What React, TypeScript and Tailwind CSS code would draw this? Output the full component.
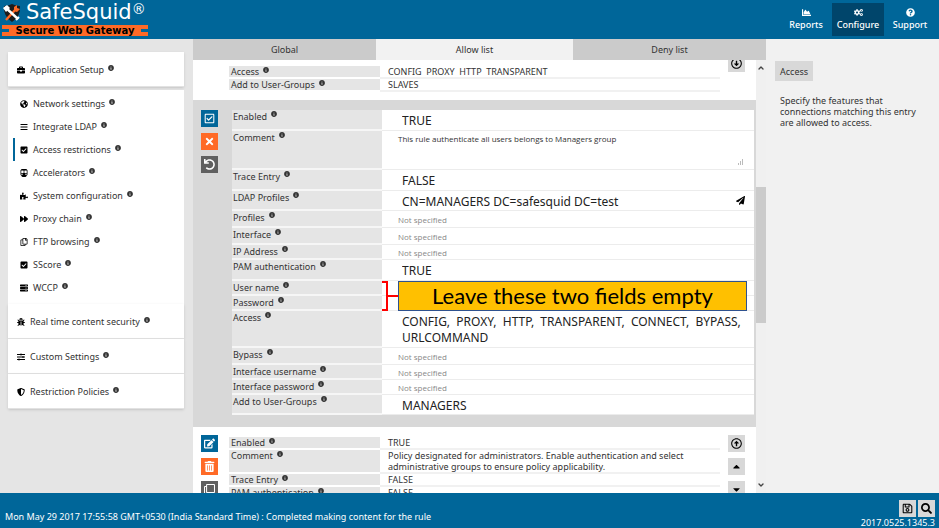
import type { ReactNode } from "react";
import type { IconType } from "react-icons";
import {
  FaBars,
  FaBriefcase,
  FaBug,
  FaCaretDown,
  FaCaretUp,
  FaChartArea,
  FaCheckSquare,
  FaCogs,
  FaEdit,
  FaForward,
  FaGlobeAmericas,
  FaInfoCircle,
  FaPaperPlane,
  FaPuzzlePiece,
  FaQuestionCircle,
  FaRegArrowAltCircleDown,
  FaRegArrowAltCircleUp,
  FaRegCheckSquare,
  FaRegClone,
  FaRegCopy,
  FaRegSave,
  FaSearch,
  FaServer,
  FaShieldAlt,
  FaSlidersH,
  FaSubway,
  FaTimes,
  FaTrashAlt,
  FaUndo,
} from "react-icons/fa";
import { LuChevronDown, LuChevronUp } from "react-icons/lu";

interface NavItem {
  label: string;
  icon: IconType;
  active?: boolean;
}

const setupItems: NavItem[] = [
  { label: "Network settings", icon: FaGlobeAmericas },
  { label: "Integrate LDAP", icon: FaBars },
  { label: "Access restrictions", icon: FaCheckSquare, active: true },
  { label: "Accelerators", icon: FaSubway },
  { label: "System configuration", icon: FaPuzzlePiece },
  { label: "Proxy chain", icon: FaForward },
  { label: "FTP browsing", icon: FaRegCopy },
  { label: "SScore", icon: FaCheckSquare },
  { label: "WCCP", icon: FaServer },
];

const sections: NavItem[] = [
  { label: "Real time content security", icon: FaBug },
  { label: "Custom Settings", icon: FaSlidersH },
  { label: "Restriction Policies", icon: FaShieldAlt },
];

function Info() {
  return <FaInfoCircle className="mt-px mb-1 ml-1 inline-block size-1.5 align-top text-[#333]" />;
}

function Logo() {
  return (
    <div className="w-[146px]">
      <div className="flex h-[25px] items-center gap-1 text-white">
        <svg viewBox="0 0 20 20" className="size-5 shrink-0">
          <path d="M2 3 Q6 3 10 1 Q14 3 18 3 Q19 13 10 19 Q1 13 2 3Z" fill="#1c1c1c" />
          <path d="M4 17 L14 6" stroke="#ff6a26" strokeWidth="2.4" />
          <path d="M12 4 L15 2 L15 5 L18 6 L15 9 L12 8Z" fill="#ff6a26" />
          <path d="M3 4 L16 16" stroke="#fff" strokeWidth="2.4" />
          <path d="M1 5 L5 2 L8 5 L4 9Z" fill="#fff" />
          <path d="M14 17 L17 14" stroke="#fff" strokeWidth="2" />
        </svg>
        <span className="flex items-start font-['DejaVu_Sans',sans-serif] text-[21px] leading-[21px]">
          SafeSquid
          <span className="text-[14px] leading-[14px]">®</span>
        </span>
      </div>
      <div className="flex h-[11px] items-center justify-between bg-[#ff6a26]">
        <span className="h-[3px] w-[7px] bg-[#006699]" />
        <span className="font-['DejaVu_Sans',sans-serif] text-[10px] leading-[11px] font-bold text-black">
          Secure Web Gateway
        </span>
        <span className="h-[3px] w-[7px] bg-[#006699]" />
      </div>
    </div>
  );
}

function TopLink({ label, icon: Icon, active }: NavItem) {
  return (
    <a
      href="#"
      className={`flex h-[33px] w-[52px] flex-col items-center justify-center gap-0.5 text-[9px] leading-[12px] font-medium text-white ${
        active ? "bg-[#00456b]" : ""
      }`}
    >
      <Icon className="size-[9px]" />
      {label}
    </a>
  );
}

function SectionLink({ label, icon: Icon }: NavItem) {
  return (
    <a href="#" className="flex h-[35px] items-center border-b border-[#e2e2e2] bg-white px-[9px] pt-px shadow-sm">
      <Icon className="mr-[5px] size-2 text-black" />
      {label}
      <Info />
    </a>
  );
}

function Sidebar() {
  return (
    <nav className="w-[193px] shrink-0 bg-[#e5e5e5] py-[13px] pr-[9px] pl-2">
      <SectionLink label="Application Setup" icon={FaBriefcase} />
      <ul className="mt-[3px] bg-white pt-0.5 pb-[5px]">
        {setupItems.map(({ label, icon: Icon, active }) => (
          <li key={label} className="px-[5px]">
            <a
              href="#"
              className={`flex h-[23px] items-center border-l-2 pl-[5px] ${
                active ? "border-[#006699]" : "border-transparent"
              }`}
            >
              <Icon className="mr-[5px] size-2 text-black" />
              {label}
              <Info />
            </a>
          </li>
        ))}
      </ul>
      {sections.map((section) => (
        <SectionLink key={section.label} {...section} />
      ))}
    </nav>
  );
}

const tones = {
  blue: "bg-[#006699] text-white",
  orange: "bg-[#ff6a26] text-white",
  dark: "bg-[#606060] text-white",
  light: "bg-[#d8d8d8] text-black",
};

function Tool({ label, icon: Icon, tone }: { label: string; icon: IconType; tone: keyof typeof tones }) {
  return (
    <button
      type="button"
      aria-label={label}
      className={`flex size-[17px] shrink-0 items-center justify-center ${tones[tone]}`}
    >
      <Icon className="size-[11px]" />
    </button>
  );
}

// Read-only row of a collapsed policy
function ReadRow({ label, children }: { label: string; children: ReactNode }) {
  return (
    <div className="flex">
      <dt className="w-[151px] shrink-0 border-b-2 border-white bg-[#e5e5e5] pl-0.5">
        {label}
        <Info />
      </dt>
      <dd className="flex-1 border-b-2 border-[#f1f1f1] pl-2 whitespace-pre-line">{children}</dd>
    </div>
  );
}

// Editable row of the open policy
function FieldRow({
  id,
  label,
  className,
  children,
}: {
  id: string;
  label: string;
  className: string;
  children?: ReactNode;
}) {
  return (
    <div className={`flex ${className}`}>
      <label
        htmlFor={id}
        className="w-[150px] shrink-0 border-b-2 border-[#f6f6f6] bg-[#e5e5e5] pl-px leading-[13px]"
      >
        {label}
        <Info />
      </label>
      <div className="flex min-w-0 flex-1 items-center border-b border-[#ececec]">{children}</div>
    </div>
  );
}

function BoolField({ id, label, value }: { id: string; label: string; value: string }) {
  return (
    <FieldRow id={id} label={label} className="h-[21px]">
      <select
        id={id}
        defaultValue={value}
        className="w-full appearance-none pt-0.5 pl-5 text-[12px] leading-4 text-[#222]"
      >
        <option>TRUE</option>
        <option>FALSE</option>
      </select>
    </FieldRow>
  );
}

function TextField({ id, label, value, icon }: { id: string; label: string; value: string; icon?: ReactNode }) {
  return (
    <FieldRow id={id} label={label} className="h-5">
      <input id={id} defaultValue={value} className="min-w-0 flex-1 pt-0.5 pl-5 text-[12px] leading-4 text-[#222]" />
      {icon}
    </FieldRow>
  );
}

function EmptyField({ id, label, className }: { id: string; label: string; className: string }) {
  return (
    <FieldRow id={id} label={label} className={className}>
      <input
        id={id}
        placeholder="Not specified"
        className="w-full pt-0.5 pl-4 font-['Open_Sans',sans-serif] text-[8px] leading-3 placeholder:text-[#888]"
      />
    </FieldRow>
  );
}

function Callout() {
  return (
    <div className="absolute inset-y-0 right-[7px] left-[150px] flex">
      <svg viewBox="0 0 16 30" className="h-[30px] w-4 shrink-0">
        <path d="M0 1 H5 V29 H0 M5 15 H16" fill="none" stroke="#f00" strokeWidth="2" />
      </svg>
      <p className="flex flex-1 items-center justify-center border border-[#2f528f] bg-[#ffc000] font-['Lato',sans-serif] text-[22px] leading-none text-black">
        Leave these two fields empty
      </p>
    </div>
  );
}

function PolicyForm() {
  return (
    <form className="min-w-0 flex-1 bg-white">
      <BoolField id="enabled" label="Enabled" value="TRUE" />
      <FieldRow id="comment" label="Comment" className="h-[39px]">
        <div className="relative h-full w-full">
          <textarea
            id="comment"
            defaultValue="This rule authenticate all users belongs to Managers group"
            className="block h-full w-full resize-none pt-0.5 pl-4 font-['Open_Sans',sans-serif] text-[8px] leading-3"
          />
          <svg viewBox="0 0 6 6" className="absolute right-2.5 bottom-1 size-1.5 text-[#bbb]">
            <path d="M0 4h1v2h-1z M2 2h1v4h-1z M4 0h1v6h-1z" fill="currentColor" />
          </svg>
        </div>
      </FieldRow>
      <BoolField id="trace" label="Trace Entry" value="FALSE" />
      <TextField
        id="ldap"
        label="LDAP Profiles"
        value="CN=MANAGERS DC=safesquid DC=test"
        icon={<FaPaperPlane className="mr-[9px] size-[9px] text-black" />}
      />
      <EmptyField id="profiles" label="Profiles" className="h-[17px]" />
      <EmptyField id="interface" label="Interface" className="h-[17px]" />
      <EmptyField id="ip" label="IP Address" className="h-[15px]" />
      <BoolField id="pam" label="PAM authentication" value="TRUE" />
      <div className="relative">
        <FieldRow id="user" label="User name" className="h-[15px]">
          <input id="user" className="w-full" />
        </FieldRow>
        <FieldRow id="password" label="Password" className="h-[15px]">
          <input id="password" type="password" className="w-full" />
        </FieldRow>
        <Callout />
      </div>
      <FieldRow id="access" label="Access" className="h-[37px]">
        <textarea
          id="access"
          defaultValue={"CONFIG,  PROXY,  HTTP,  TRANSPARENT,  CONNECT,  BYPASS,  URLCOMMAND"}
          className="h-full w-full resize-none overflow-hidden pt-[3px] pl-5 text-[12px] leading-4 text-[#222]"
        />
      </FieldRow>
      <EmptyField id="bypass" label="Bypass" className="h-[17px]" />
      <EmptyField id="ifuser" label="Interface username" className="h-[15px]" />
      <EmptyField id="ifpass" label="Interface password" className="h-[15px]" />
      <TextField id="groups" label="Add to User-Groups" value="MANAGERS" />
    </form>
  );
}

function Policies() {
  return (
    <div className="min-w-0 flex-1 overflow-hidden bg-white">
      {/* Tail of the previous policy */}
      <div className="flex h-10 overflow-hidden pr-[11px] pl-9">
        <dl className="flex-1 pt-1.5 leading-[11px]">
          <ReadRow label="Access">CONFIG&nbsp; PROXY&nbsp; HTTP&nbsp; TRANSPARENT</ReadRow>
          <ReadRow label="Add to User-Groups">SLAVES</ReadRow>
        </dl>
        <div className="ml-2 flex flex-col justify-end pb-7">
          <Tool label="Move to bottom" icon={FaRegArrowAltCircleDown} tone="light" />
        </div>
      </div>

      {/* Policy being edited */}
      <div className="flex bg-[#d8d8d8] pt-2.5 pr-0.5 pb-3 pl-2">
        <div className="mr-3.5 flex flex-col gap-1.5">
          <Tool label="Save" icon={FaRegCheckSquare} tone="blue" />
          <Tool label="Cancel" icon={FaTimes} tone="orange" />
          <Tool label="Undo" icon={FaUndo} tone="dark" />
        </div>
        <PolicyForm />
      </div>

      {/* Next policy */}
      <div className="flex pt-2 pr-[11px] pl-2">
        <div className="mr-[11px] flex flex-col gap-1.5">
          <Tool label="Edit" icon={FaEdit} tone="blue" />
          <Tool label="Delete" icon={FaTrashAlt} tone="orange" />
          <Tool label="Clone" icon={FaRegClone} tone="dark" />
        </div>
        <dl className="flex-1 pt-0.5 leading-[11px]">
          <ReadRow label="Enabled">TRUE</ReadRow>
          <ReadRow label="Comment">
            {"Policy designated for administrators. Enable authentication and select\nadministrative groups to ensure policy applicability."}
          </ReadRow>
          <ReadRow label="Trace Entry">FALSE</ReadRow>
          <ReadRow label="PAM authentication">FALSE</ReadRow>
        </dl>
        <div className="ml-2 flex flex-col gap-1.5">
          <Tool label="Move to top" icon={FaRegArrowAltCircleUp} tone="light" />
          <Tool label="Move up" icon={FaCaretUp} tone="light" />
          <Tool label="Move down" icon={FaCaretDown} tone="light" />
        </div>
      </div>
    </div>
  );
}

function Scrollbar() {
  return (
    <div className="flex w-2.5 shrink-0 flex-col items-center bg-[#f0f0f0] py-1 text-[#444]">
      <LuChevronUp className="size-2 shrink-0" strokeWidth={4} />
      <div className="flex w-full flex-1 flex-col">
        <div className="flex-[115]" />
        <div className="flex-[136] bg-[#cbcbcb]" />
        <div className="flex-[158]" />
      </div>
      <LuChevronDown className="size-2 shrink-0" strokeWidth={4} />
    </div>
  );
}

export default function App() {
  return (
    <div className="flex h-screen flex-col overflow-hidden bg-[#f1f1f1] font-['Noto_Sans',sans-serif] text-[9px] leading-[11px] text-[#333]">
      <header className="flex h-[39px] shrink-0 items-start justify-between bg-[#006699] pr-[3px] pl-0.5">
        <Logo />
        <nav className="flex pt-[3px]">
          <TopLink label="Reports" icon={FaChartArea} />
          <TopLink label="Configure" icon={FaCogs} active />
          <TopLink label="Support" icon={FaQuestionCircle} />
        </nav>
      </header>

      <div className="flex min-h-0 flex-1">
        <Sidebar />

        <main className="flex min-w-0 flex-1 flex-col">
          <div className="grid h-[21px] shrink-0 grid-cols-[183fr_197fr_193fr]">
            <button type="button" className="bg-[#cbcbcb]">Global</button>
            <button type="button" className="bg-[#f2f2f2]">Allow list</button>
            <button type="button" className="bg-[#cbcbcb]">Deny list</button>
          </div>
          <div className="flex min-h-0 flex-1">
            <Policies />
            <Scrollbar />
          </div>
        </main>

        <aside className="w-[173px] shrink-0 px-[9px] pt-[22px]">
          <h2 className="inline-block bg-[#d8d8d8] px-[5px] pt-[5px] pb-1">Access</h2>
          <p className="mt-3.5 pl-[5px]">
            Specify the features that
            <br />
            connections matching this entry
            <br />
            are allowed to access.
          </p>
        </aside>
      </div>

      <footer className="flex h-[35px] shrink-0 items-end justify-between bg-[#006699] pr-1 pl-[5px] text-white">
        <p className="pb-1.5">
          Mon May 29 2017 17:55:58 GMT+0530 (India Standard Time) : Completed making content for the rule
        </p>
        <div className="flex flex-col items-end">
          <div className="flex gap-0.5">
            <Tool label="Save configuration" icon={FaRegSave} tone="light" />
            <Tool label="Search" icon={FaSearch} tone="light" />
          </div>
          <span>2017.0525.1345.3</span>
        </div>
      </footer>
    </div>
  );
}
